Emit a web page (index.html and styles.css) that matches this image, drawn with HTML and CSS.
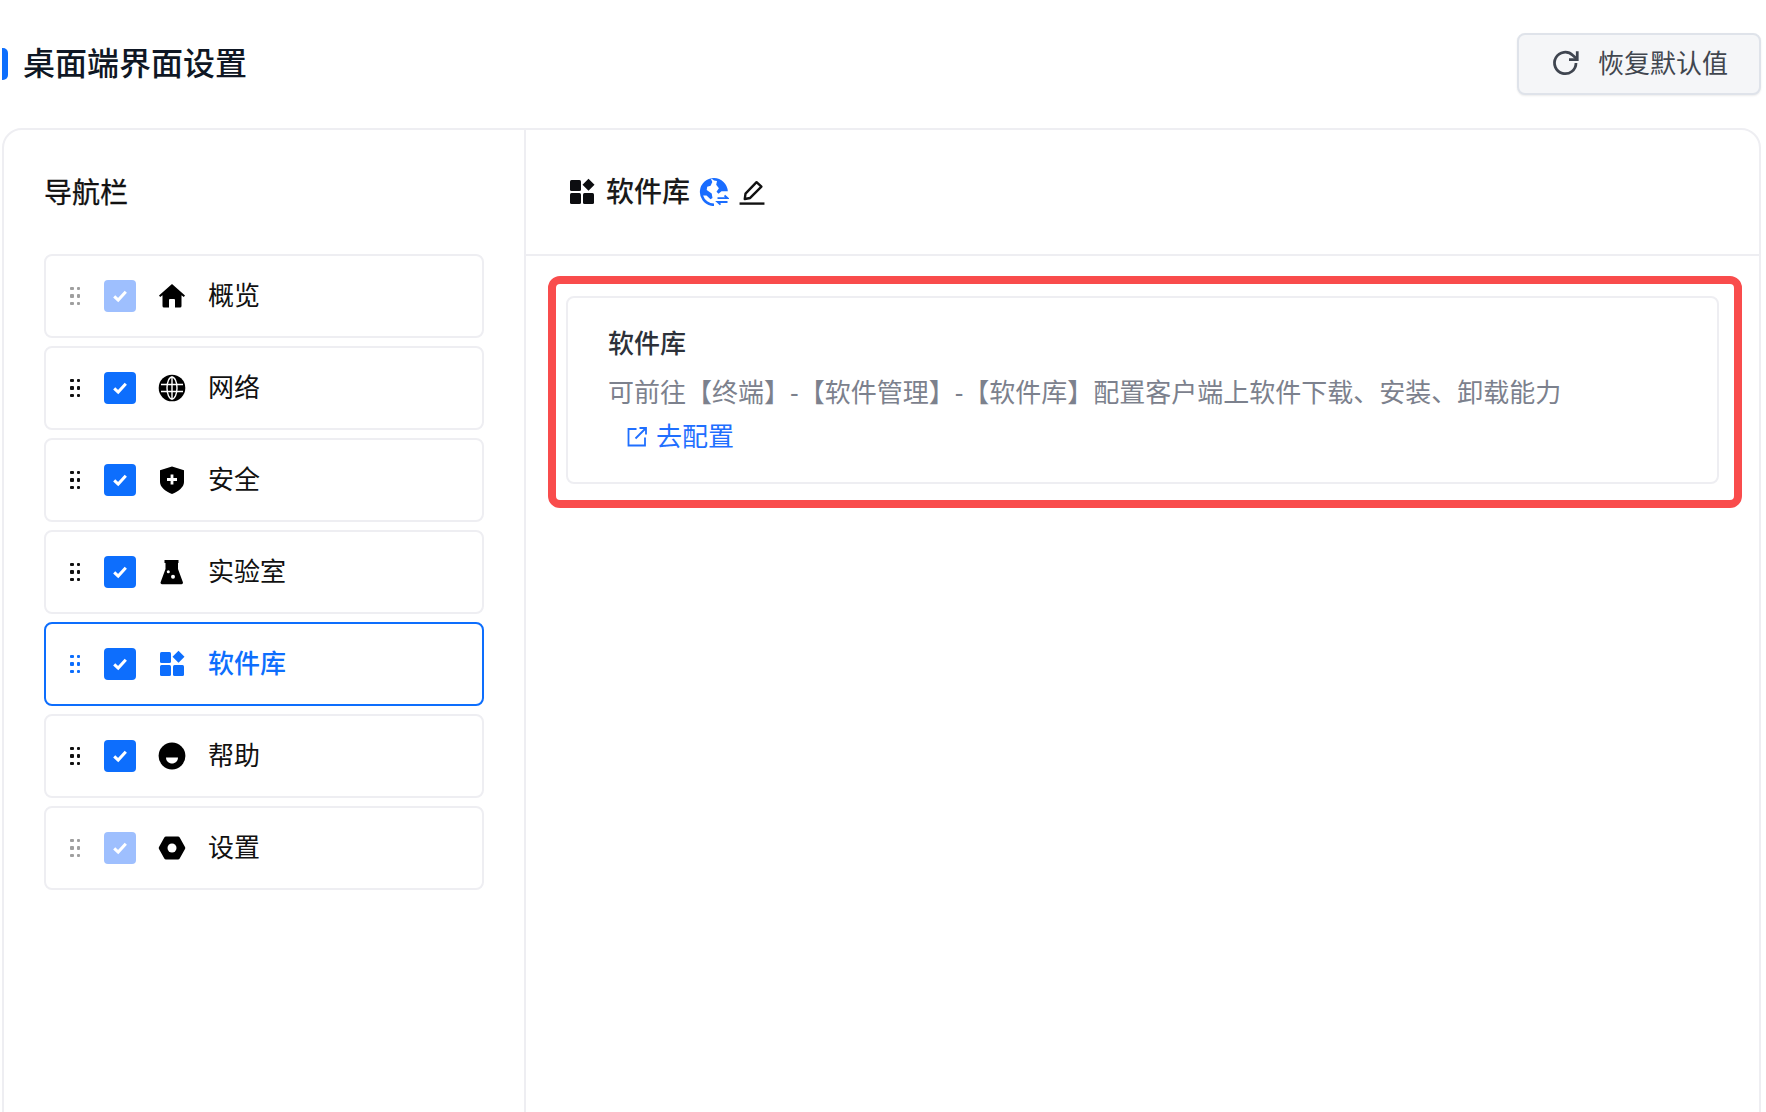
FILE: index.html
```html
<!DOCTYPE html>
<html lang="zh-CN">
<head>
    <meta charset="UTF-8">
    <title>桌面端界面设置</title>
    <link rel="stylesheet" href="styles.css">
</head>
<body>
    <div class="page-head">
        <h1 class="page-title">桌面端界面设置</h1>
        <button class="reset-button">
            <svg class="reset-icon" viewBox="0 0 24 24" fill="none" stroke="#3f4550" stroke-width="2.2"><path d="M20 12a8.6 8.6 0 1 1-2.6-6.2L20.5 8.6"/><path d="M21 2.6v6.6h-6.6"/></svg>
            <span class="reset-text">恢复默认值</span>
        </button>
    </div>
    <div class="settings-card">
        <div class="nav-panel">
            <h2 class="nav-title">导航栏</h2>
            <div class="nav-list">
                <div class="nav-item">
                    <span class="drag-dots faded"><i></i><i></i><i></i><i></i><i></i><i></i></span>
                    <span class="check faded"><svg viewBox="0 0 32 32"><path d="M10.2 16.300l4 3.800 7.600-8.400"/></svg></span>
                    <svg class="nav-icon" viewBox="0 0 28 28"><path d="M14 2L1 13.500 2.200 15l2.300-1.800V24A1.500 1.500 0 0 0 6 25.500h5V18a1 1 0 0 1 1-1h4a1 1 0 0 1 1 1v7.500h5a1.500 1.500 0 0 0 1.500-1.500V13.200l2.300 1.800 1.200-1.500z"/></svg>
                    <span class="nav-label">概览</span>
                </div>
                <div class="nav-item">
                    <span class="drag-dots"><i></i><i></i><i></i><i></i><i></i><i></i></span>
                    <span class="check"><svg viewBox="0 0 32 32"><path d="M10.2 16.300l4 3.800 7.600-8.400"/></svg></span>
                    <svg class="nav-icon" viewBox="0 0 28 28"><circle cx="14" cy="14" r="13.300"/><g fill="none" stroke="#fff" stroke-width="1.400"><ellipse cx="14" cy="14" rx="5" ry="11"/><path d="M14 2.500v23M3 10.500h22M3 17.500h22"/></g></svg>
                    <span class="nav-label">网络</span>
                </div>
                <div class="nav-item">
                    <span class="drag-dots"><i></i><i></i><i></i><i></i><i></i><i></i></span>
                    <span class="check"><svg viewBox="0 0 32 32"><path d="M10.2 16.300l4 3.800 7.600-8.400"/></svg></span>
                    <svg class="nav-icon" viewBox="0 0 28 28"><path d="M14 .5L26 4.300v11.700c0 5-5.500 9.600-12 12-6.500-2.400-12-7-12-12V4.300z"/><path d="M14 8.500v10M9 13.500h10" stroke="#fff" stroke-width="2.800" fill="none"/></svg>
                    <span class="nav-label">安全</span>
                </div>
                <div class="nav-item">
                    <span class="drag-dots"><i></i><i></i><i></i><i></i><i></i><i></i></span>
                    <span class="check"><svg viewBox="0 0 32 32"><path d="M10.2 16.300l4 3.800 7.600-8.400"/></svg></span>
                    <svg class="nav-icon" viewBox="0 0 28 28"><path d="M6.500 2h14v3H20v6l4.800 13a1.500 1.500 0 0 1-1.400 2.200H4.100A1.500 1.500 0 0 1 2.700 24L7.500 11V5h-1z"/><circle cx="10.300" cy="13.700" r="1.500" fill="#fff"/><circle cx="15" cy="18.700" r="2" fill="#fff"/></svg>
                    <span class="nav-label">实验室</span>
                </div>
                <div class="nav-item active">
                    <span class="drag-dots"><i></i><i></i><i></i><i></i><i></i><i></i></span>
                    <span class="check"><svg viewBox="0 0 32 32"><path d="M10.2 16.300l4 3.800 7.600-8.400"/></svg></span>
                    <svg class="nav-icon" viewBox="0 0 28 28"><rect x="2" y="2" width="11" height="11" rx="1.500"/><rect x="2" y="15" width="11" height="11" rx="1.500"/><rect x="15" y="15" width="11" height="11" rx="1.500"/><path d="M20.500.8l6 6-6 6-6-6z"/></svg>
                    <span class="nav-label">软件库</span>
                </div>
                <div class="nav-item">
                    <span class="drag-dots"><i></i><i></i><i></i><i></i><i></i><i></i></span>
                    <span class="check"><svg viewBox="0 0 32 32"><path d="M10.2 16.300l4 3.800 7.600-8.400"/></svg></span>
                    <svg class="nav-icon" viewBox="0 0 28 28"><circle cx="14" cy="14" r="13.400"/><path d="M8 15.500h12c0 3.500-2.700 6-6 6s-6-2.500-6-6z" fill="#fff"/></svg>
                    <span class="nav-label">帮助</span>
                </div>
                <div class="nav-item">
                    <span class="drag-dots faded"><i></i><i></i><i></i><i></i><i></i><i></i></span>
                    <span class="check faded"><svg viewBox="0 0 32 32"><path d="M10.2 16.300l4 3.800 7.600-8.400"/></svg></span>
                    <svg class="nav-icon" viewBox="0 0 28 28"><path d="M8 2.500h12a2 2 0 0 1 1.700 1L27 13a2 2 0 0 1 0 2l-5.300 9.500a2 2 0 0 1-1.700 1H8a2 2 0 0 1-1.700-1L1 15a2 2 0 0 1 0-2L6.300 3.500a2 2 0 0 1 1.700-1z"/><circle cx="14" cy="14" r="4.500" fill="#fff"/></svg>
                    <span class="nav-label">设置</span>
                </div>
            </div>
        </div>
        <div class="detail-panel">
            <div class="detail-head">
                <svg class="head-icon" viewBox="0 0 28 28"><rect x="2" y="2" width="11" height="11" rx="1.500"/><rect x="2" y="15" width="11" height="11" rx="1.500"/><rect x="15" y="15" width="11" height="11" rx="1.500"/><path d="M20.500.8l6 6-6 6-6-6z"/></svg>
                <span class="detail-name">软件库</span>
                <svg class="globe-icon" viewBox="0 0 30 30"><path d="M15 1a14 14 0 0 0-3 27.700c1 .2 2 .3 3 .3v-2.600a11.400 11.400 0 0 1-10.900-8l3.400.2 4 3.600 2-1.200-.8-4.500-5-3.600.5-3.200 3.400-1 1.700-3.700-1.500-3.400A11.400 11.400 0 0 1 15 3.600l3 .4-.8 3.800 2.700 3.400-2.400 3.500 2 2 3-2.400h6.300A14 14 0 0 0 15 1z" fill="#1a6dff"/><path d="M18.500 21.200h10l-3-2.700M28.500 25h-10l3 2.700" fill="none" stroke="#1a6dff" stroke-width="1.800"/></svg>
                <svg class="edit-icon" viewBox="0 0 24 24" fill="none" stroke="#111" stroke-width="2.200"><path d="M5.300 18.500l.7-5L16.200 2.900l4.500 4.200L10.300 17.500z" stroke-linejoin="round"/><path d="M.5 22.700h23"/></svg>
            </div>
            <div class="detail-body">
                <div class="highlight-box">
                    <div class="info-card">
                        <div class="info-title">软件库</div>
                        <div class="info-desc">可前往【终端】-【软件管理】-【软件库】配置客户端上软件下载、安装、卸载能力</div>
                        <a class="info-link" href="#">
                            <svg class="link-icon" viewBox="0 0 20 20" fill="none" stroke="#1f6fff" stroke-width="1.800"><path d="M9.500 2H1.500v16.500H18v-8"/><path d="M8.500 11.500L18.500 1.500M12.500 1h6.500v6.500"/></svg>
                            去配置
                        </a>
                    </div>
                </div>
            </div>
        </div>
    </div>
</body>
</html>
```
FILE: styles.css
```css
* {
    box-sizing: border-box;
}
html, body {
    height: 100%;
    overflow: hidden;
}
body {
    margin: 0;
    padding: 33px 5px 0 2px;
    background-color: #fff;
    font-family: Inter, "Noto Sans CJK SC", sans-serif;
    color: #111;
}
.page-head {
    display: flex;
    align-items: center;
    justify-content: space-between;
    height: 62px;
    margin-bottom: 33px;
}
.page-title {
    margin: 0;
    padding-left: 21px;
    position: relative;
    font-size: 32px;
    font-weight: 500;
    line-height: 44px;
    color: #0f1724;
}
.page-title::before {
    content: "";
    position: absolute;
    left: 0;
    top: 0;
    bottom: 0;
    margin: auto 0;
    width: 6px;
    height: 32px;
    background-color: #0d6efd;
    border-radius: 0 5px 5px 0;
}
.reset-button {
    display: flex;
    align-items: center;
    gap: 17px;
    width: 244px;
    height: 62px;
    padding: 0 0 0 32px;
    font-family: inherit;
    font-size: 26px;
    color: #41464f;
    background-color: #f5f6f8;
    border: 2px solid #dfe3ea;
    border-radius: 8px;
    box-shadow: 0 1px 2px rgba(0, 0, 0, 0.08);
}
.reset-icon {
    width: 30px;
    height: 30px;
    margin-bottom: 3px;
}
.reset-text {
    margin-bottom: 5px;
}
.settings-card {
    display: flex;
    height: 1100px;
    border: 2px solid #eeeef2;
    border-radius: 20px;
}
.nav-panel {
    width: 522px;
    padding: 42px 40px;
    border-right: 2px solid #eeeef2;
    flex-shrink: 0;
}
.nav-title {
    margin: 0 0 40px;
    font-size: 28px;
    font-weight: 400;
    line-height: 42px;
    -webkit-text-stroke: 0.3px currentColor;
}
.nav-list {
    display: flex;
    flex-direction: column;
    gap: 8px;
}
.nav-item {
    display: flex;
    align-items: center;
    height: 84px;
    padding-left: 24px;
    border: 2px solid #eeeef2;
    border-radius: 8px;
}
.drag-dots {
    display: grid;
    grid-template-columns: 3.500px 3.500px;
    column-gap: 3px;
    row-gap: 4px;
    width: 10px;
    margin-right: 24px;
}
.drag-dots i {
    width: 3.500px;
    height: 3.500px;
    background-color: #111;
    border-radius: 1px;
}
.drag-dots.faded {
    opacity: 0.4;
}
.check {
    display: flex;
    width: 32px;
    height: 32px;
    background-color: #0d6efd;
    border-radius: 4px;
}
.check.faded {
    background-color: #9ebffe;
}
.check svg {
    width: 32px;
    height: 32px;
    fill: none;
    stroke: #fff;
    stroke-width: 3;
}
.nav-icon {
    width: 28px;
    height: 28px;
    margin: 0 22px 0 22px;
    fill: #000;
}
.nav-label {
    font-size: 26px;
    line-height: 36px;
}
.active {
    border-color: #0d6efd;
    color: #0d6efd;
}
.active .nav-label {
    font-weight: 500;
}
.active .drag-dots i {
    background-color: #0d6efd;
}
.active .nav-icon {
    fill: #0d6efd;
}
.detail-panel {
    flex-grow: 1;
}
.detail-head {
    display: flex;
    align-items: center;
    height: 126px;
    padding-left: 42px;
    border-bottom: 2px solid #eeeef2;
}
.head-icon {
    width: 28px;
    height: 28px;
    fill: #0c0d10;
    margin-right: 10px;
}
.detail-name {
    font-size: 28px;
    font-weight: 500;
    line-height: 42px;
    color: #1a1a1a;
}
.globe-icon {
    width: 30px;
    height: 30px;
    margin-left: 9px;
}
.edit-icon {
    width: 26px;
    height: 26px;
    margin-left: 10px;
}
.detail-body {
    padding: 20px 17px 0 22px;
}
.highlight-box {
    padding: 12px 15px 16px 10px;
    border: 8px solid #f94c4c;
    border-radius: 12px;
}
.info-card {
    height: 188px;
    padding: 27px 40px 0;
    border: 2px solid #eeeef2;
    border-radius: 8px;
}
.info-title {
    font-size: 26px;
    font-weight: 500;
    line-height: 38px;
    color: #2c313a;
}
.info-desc {
    margin-top: 8px;
    font-family: "Liberation Sans", "Noto Sans CJK SC", sans-serif;
    font-size: 26px;
    line-height: 44px;
    color: #7c818d;
}
.info-link {
    display: inline-flex;
    align-items: center;
    gap: 9px;
    margin: 0 0 0 19px;
    font-size: 26px;
    line-height: 44px;
    color: #1f6fff;
    text-decoration: none;
}
.link-icon {
    width: 20px;
    height: 20px;
}
```
